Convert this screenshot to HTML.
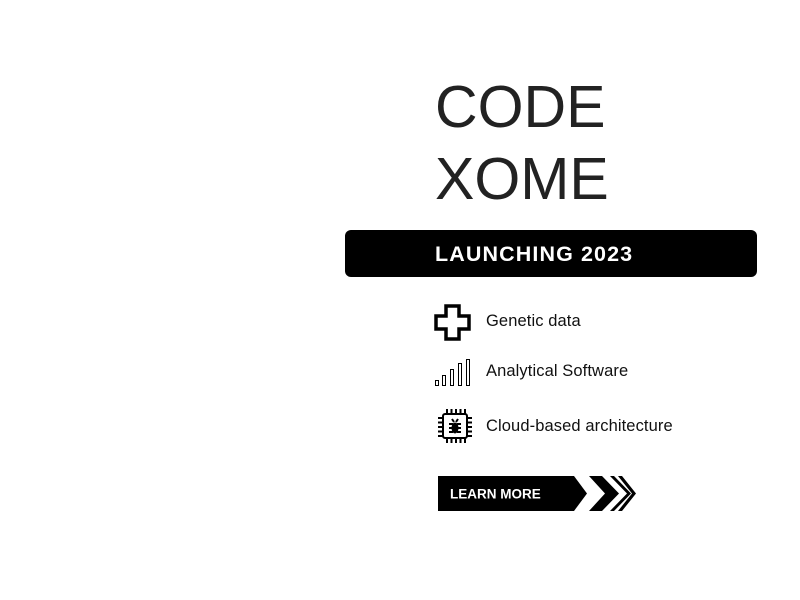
<!DOCTYPE html>
<html><head><meta charset="utf-8"><style>
html,body{margin:0;padding:0;background:#fff;}
body{width:800px;height:600px;position:relative;overflow:hidden;font-family:"Liberation Sans",sans-serif;}
.t{position:absolute;left:435px;font-size:59px;line-height:59px;letter-spacing:0px;color:#222;font-weight:normal;}
.bar{position:absolute;left:345px;top:230px;width:412px;height:47px;background:#000;border-radius:6px;}
.bar span{position:absolute;left:90px;top:12px;color:#fff;font-weight:bold;font-size:21.5px;letter-spacing:1.1px;}
.it{position:absolute;left:486px;font-size:16.5px;color:#111;letter-spacing:0.1px;}
svg{position:absolute;}
</style></head><body>
<div class="t" style="top:78px">CODE</div>
<div class="t" style="top:150px">XOME</div>
<div class="bar"><span>LAUNCHING 2023</span></div>

<svg style="left:434px;top:304px" width="38" height="38" viewBox="0 0 38 38">
<path d="M12 2H25V12H35V25H25V35H12V25H2V12H12Z" fill="none" stroke="#000" stroke-width="3.5" stroke-linejoin="miter"/>
</svg>
<div class="it" style="top:312px">Genetic data</div>

<svg style="left:434px;top:358px" width="40" height="30" viewBox="0 0 40 30">
<g fill="none" stroke="#000" stroke-width="1">
<rect x="1.5" y="22.5" width="3" height="5"/>
<rect x="8.5" y="17.5" width="3" height="10"/>
<rect x="16.5" y="11.5" width="3" height="16"/>
<rect x="24.5" y="5.5" width="3" height="22"/>
<rect x="32.5" y="1.5" width="3" height="26"/>
</g></svg>
<div class="it" style="top:362px">Analytical Software</div>

<svg style="left:436px;top:407px" width="38" height="38" viewBox="0 0 38 38">
<g stroke="#000" stroke-width="2" fill="none">
<rect x="7" y="7" width="24" height="24" rx="2"/>
<path d="M11 2v5M15.5 2v5M20 2v5M24.5 2v5M29 2v5M11 31v5M15.5 31v5M20 31v5M24.5 31v5M29 31v5M2 11h5M2 15.5h5M2 20h5M2 24.5h5M2 29h5M31 11h5M31 15.5h5M31 20h5M31 24.5h5M31 29h5"/>
<path d="M13 17h4M21 17h4M13 21h4M21 21h4M13 25h4M21 25h4M16 12l2 3M22 12l-2 3"/>
</g>
<ellipse cx="19" cy="21" rx="3.5" ry="5.5" fill="#000"/>
</svg>
<div class="it" style="top:417px">Cloud-based architecture</div>

<svg style="left:438px;top:476px" width="200" height="36" viewBox="0 0 200 36">
<path d="M0 0H136L149 17.5L136 35H0Z" fill="#000"/>
<path d="M151 0H164L181 17.5L164 35H151L167 17.5Z" fill="#000"/>
<path d="M172 0H176L193 17.5L176 35H172L189 17.5Z" fill="#000"/>
<path d="M180 0H184L198 17.5L184 35H180L194 17.5Z" fill="#000"/>
<text x="12" y="22.5" fill="#fff" font-family="Liberation Sans, sans-serif" font-weight="bold" font-size="13.5">LEARN MORE</text>
</svg>
</body></html>
